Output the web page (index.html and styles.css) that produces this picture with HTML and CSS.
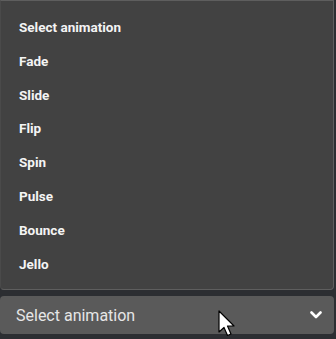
FILE: index.html
```html
<!DOCTYPE html>
<html>
<head>
<meta charset="utf-8">
<link rel="stylesheet" href="styles.css">
</head>
<body>
<div class="wrap">
  <ul class="menu">
    <li>Select animation</li>
    <li>Fade</li>
    <li>Slide</li>
    <li>Flip</li>
    <li>Spin</li>
    <li>Pulse</li>
    <li>Bounce</li>
    <li>Jello</li>
  </ul>
  <div class="select">
    <span>Select animation</span>
    <svg class="chev" width="12" height="8" viewBox="0 0 12 8"><path d="M1.5 1.5 L6 6 L10.5 1.5" fill="none" stroke="#ffffff" stroke-width="2.6" stroke-linecap="round" stroke-linejoin="round"/></svg>
  </div>
  <svg class="cursor" width="20" height="30" viewBox="0 0 20 30"><path d="M1 1 L1 22 L6 17.5 L9.5 25.5 L13 24 L9.5 16 L16 16 Z" fill="#ffffff" stroke="#000000" stroke-width="1.2" stroke-linejoin="round"/></svg>
</div>
</body>
</html>
```
FILE: styles.css
```css
html, body {
  margin: 0;
  padding: 0;
  background: #2c2e32;
  width: 336px;
  height: 339px;
  overflow: hidden;
  font-family: Roboto, "Liberation Sans", sans-serif;
}
.wrap {
  position: relative;
  width: 334px;
}
.menu {
  list-style: none;
  margin: 0;
  padding: 9px 0 7px 0;
  background: #424242;
  border: 1px solid #5e5e5e;
  border-left-color: #4a4a4a;
  border-radius: 0 0 4px 4px;
  height: 272px;
}
.menu li {
  height: 33.8px;
  line-height: 34px;
  padding-left: 18px;
  font-size: 13.5px;
  font-weight: 700;
  color: #f4f4f4;
}
.select {
  margin-top: 6px;
  height: 38px;
  border-radius: 4px;
  background: #5a5a5a;
  display: flex;
  align-items: center;
  justify-content: space-between;
  padding: 0 12px 0 16px;
  color: #e6e6e6;
  font-size: 16px;
}
.chev {
  display: block;
}
.cursor {
  position: absolute;
  left: 218px;
  top: 310px;
}
```
